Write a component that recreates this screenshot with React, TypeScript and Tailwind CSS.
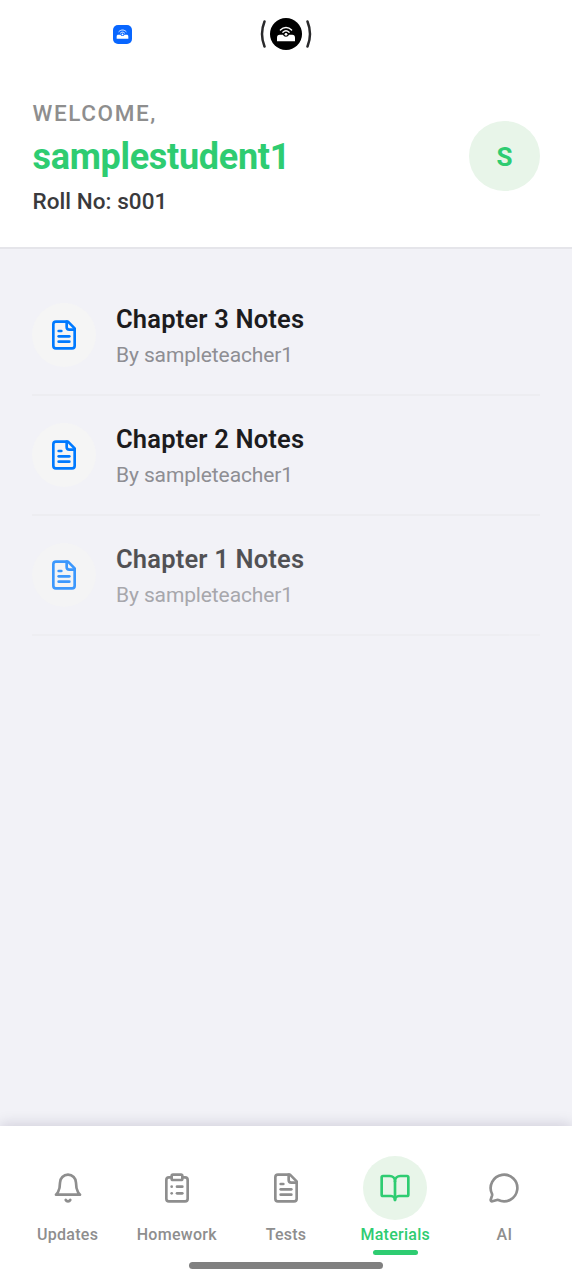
import React from "react";
import { BookOpen, ClipboardList, MessageCircle } from "lucide-react";

type IconProps = {
  className?: string;
  strokeWidth?: number;
};

type Material = {
  id: number;
  title: string;
  author: string;
  className: string;
};

const materials: Material[] = [
  { id: 3, title: "Chapter 3 Notes", author: "sampleteacher1", className: "" },
  { id: 2, title: "Chapter 2 Notes", author: "sampleteacher1", className: "" },
  {
    id: 1,
    title: "Chapter 1 Notes",
    author: "sampleteacher1",
    className: "opacity-75",
  },
];

const FileIcon = ({ className, strokeWidth = 2 }: IconProps) => (
  <svg
    viewBox="0 0 24 24"
    fill="none"
    stroke="currentColor"
    strokeWidth={strokeWidth}
    strokeLinecap="round"
    strokeLinejoin="round"
    className={className}
  >
    <path d="M15 2H6a2 2 0 0 0-2 2v16a2 2 0 0 0 2 2h12a2 2 0 0 0 2-2V7Z" />
    <path d="M14 2v4a2 2 0 0 0 2 2h4" />
    <path d="M10 9H8" />
    <path d="M16 13H8" />
    <path d="M16 17H8" />
  </svg>
);

const BellIcon = ({ className, strokeWidth = 2 }: IconProps) => (
  <svg
    viewBox="0 0 24 24"
    fill="none"
    stroke="currentColor"
    strokeWidth={strokeWidth}
    strokeLinecap="round"
    strokeLinejoin="round"
    className={className}
  >
    <path d="M6 8a6 6 0 0 1 12 0c0 7 3 9 3 9H3s3-2 3-9" />
    <path d="M10.3 21a1.94 1.94 0 0 0 3.4 0" />
  </svg>
);

// Wifi waves above a wide pair of shoulders
const WifiPerson = ({ className }: IconProps) => (
  <svg viewBox="0 0 20 16" fill="none" className={className}>
    <path
      d="M4.4 4C7.6.6 12.4.6 15.6 4M6.9 6.2c1.9-1.9 4.3-1.9 6.2 0"
      stroke="currentColor"
      strokeWidth="1.4"
      strokeLinecap="round"
    />
    <path
      d="M1 15.2v-3.4c0-2 .9-3 2.8-3H7c.5 1.2 1.6 2 3 2s2.5-.8 3-2h3.2c1.9 0 2.8 1 2.8 3v3.4Z"
      fill="currentColor"
    />
    <circle cx="10" cy="8.3" r="1.4" fill="currentColor" />
  </svg>
);

const tabs = [
  { label: "Updates", Icon: BellIcon },
  { label: "Homework", Icon: ClipboardList },
  { label: "Tests", Icon: FileIcon },
  { label: "Materials", Icon: BookOpen },
  { label: "AI", Icon: MessageCircle },
];

const StatusBar = () => (
  <div className="grid h-[68px] grid-cols-[113px_19px_1fr_52px_260px] items-center">
    <div className="col-start-2 flex h-[19px] w-[19px] items-center justify-center rounded-[5px] bg-[#0866ff] text-white">
      <WifiPerson className="w-[13px]" />
    </div>
    <div className="col-start-4 flex items-center justify-between">
      <svg viewBox="0 0 7 30" className="h-[30px] w-[7px]" fill="none">
        <path
          d="M4.5 2.5Q-.5 15 4.5 27.5"
          stroke="#29292b"
          strokeWidth="2.5"
          strokeLinecap="round"
        />
      </svg>
      <div className="flex h-8 w-8 items-center justify-center rounded-full bg-black text-white">
        <WifiPerson className="w-5" />
      </div>
      <svg viewBox="0 0 7 30" className="h-[30px] w-[7px]" fill="none">
        <path
          d="M2.5 2.5Q7.5 15 2.5 27.5"
          stroke="#29292b"
          strokeWidth="2.5"
          strokeLinecap="round"
        />
      </svg>
    </div>
  </div>
);

const Header = () => (
  <header className="flex h-[181px] items-start justify-between border-b-2 border-[#e5e5ea] px-8 pt-[30px]">
    <div className="whitespace-nowrap pl-[0.5px]">
      <p className="text-[22.5px] font-medium leading-[30px] tracking-[1.6px] text-[#8e8e8e]">
        WELCOME,
      </p>
      <h1 className="mt-2 text-[36px] font-bold leading-[42px] tracking-[-0.3px] text-[#2ecc71]">
        samplestudent1
      </h1>
      <p className="mt-2 text-[22.5px] font-medium leading-[30px] tracking-[0.05px] text-[#3a3a3c]">
        Roll No: s001
      </p>
    </div>
    <div className="mt-[23px] flex h-[70px] w-[71px] items-center justify-center rounded-full bg-[#e8f5e9] pt-[3px] text-[26px] font-bold text-[#2ecc71]">
      S
    </div>
  </header>
);

const MaterialRow = ({ title, author, className }: Material) => (
  <div
    className={`flex h-[120px] items-center border-b-2 border-[#ededf1] ${className}`}
  >
    <div className="flex h-16 w-16 items-center justify-center rounded-full bg-[#f5f5f5]">
      <FileIcon className="h-8 w-8 text-[#007aff]" />
    </div>
    <div className="ml-5 whitespace-nowrap pt-[2px]">
      <h2 className="text-[25.5px] font-semibold leading-[32px] tracking-[0.18px] text-[#1c1c1e]">
        {title}
      </h2>
      <p className="mt-1.5 text-[21px] leading-7 tracking-[-0.12px] text-[#8e8e93]">
        By {author}
      </p>
    </div>
  </div>
);

const TabBar = ({ active }: { active: string }) => (
  <nav className="flex h-[154px] flex-col bg-white shadow-[0_-2px_13px_rgba(20,0,60,0.15)]">
    <div className="grid grid-cols-5 px-[13px] pt-[29.5px]">
      {tabs.map(({ label, Icon }) => {
        const isActive = label === active;
        return (
          <div
            key={label}
            className={`flex flex-col items-center ${
              isActive ? "text-[#2ecc71]" : "text-[#8e8e8e]"
            }`}
          >
            <div
              className={`flex h-16 w-16 items-center justify-center rounded-full ${
                isActive ? "bg-[#e8f5e9]" : ""
              }`}
            >
              <Icon className="h-8 w-8" strokeWidth={2} />
            </div>
            <span className="mt-[4.5px] text-[16px] font-medium leading-[22px] tracking-[0.27px]">
              {label}
            </span>
            {isActive && (
              <div className="mt-[3.5px] h-[5px] w-[45px] rounded-full bg-[#2ecc71]" />
            )}
          </div>
        );
      })}
    </div>
    <div className="mx-auto mt-[7.5px] h-[7px] w-[194px] rounded-full bg-[#808080]" />
  </nav>
);

const App = () => (
  <div className="flex h-[1280px] w-[572px] flex-col overflow-hidden bg-[#f2f2f7] font-[Roboto,sans-serif]">
    <div className="bg-white">
      <StatusBar />
      <Header />
    </div>
    <main className="flex-1 px-8 pt-[27px]">
      {materials.map((item) => (
        <MaterialRow key={item.id} {...item} />
      ))}
    </main>
    <TabBar active="Materials" />
  </div>
);

export default App;
